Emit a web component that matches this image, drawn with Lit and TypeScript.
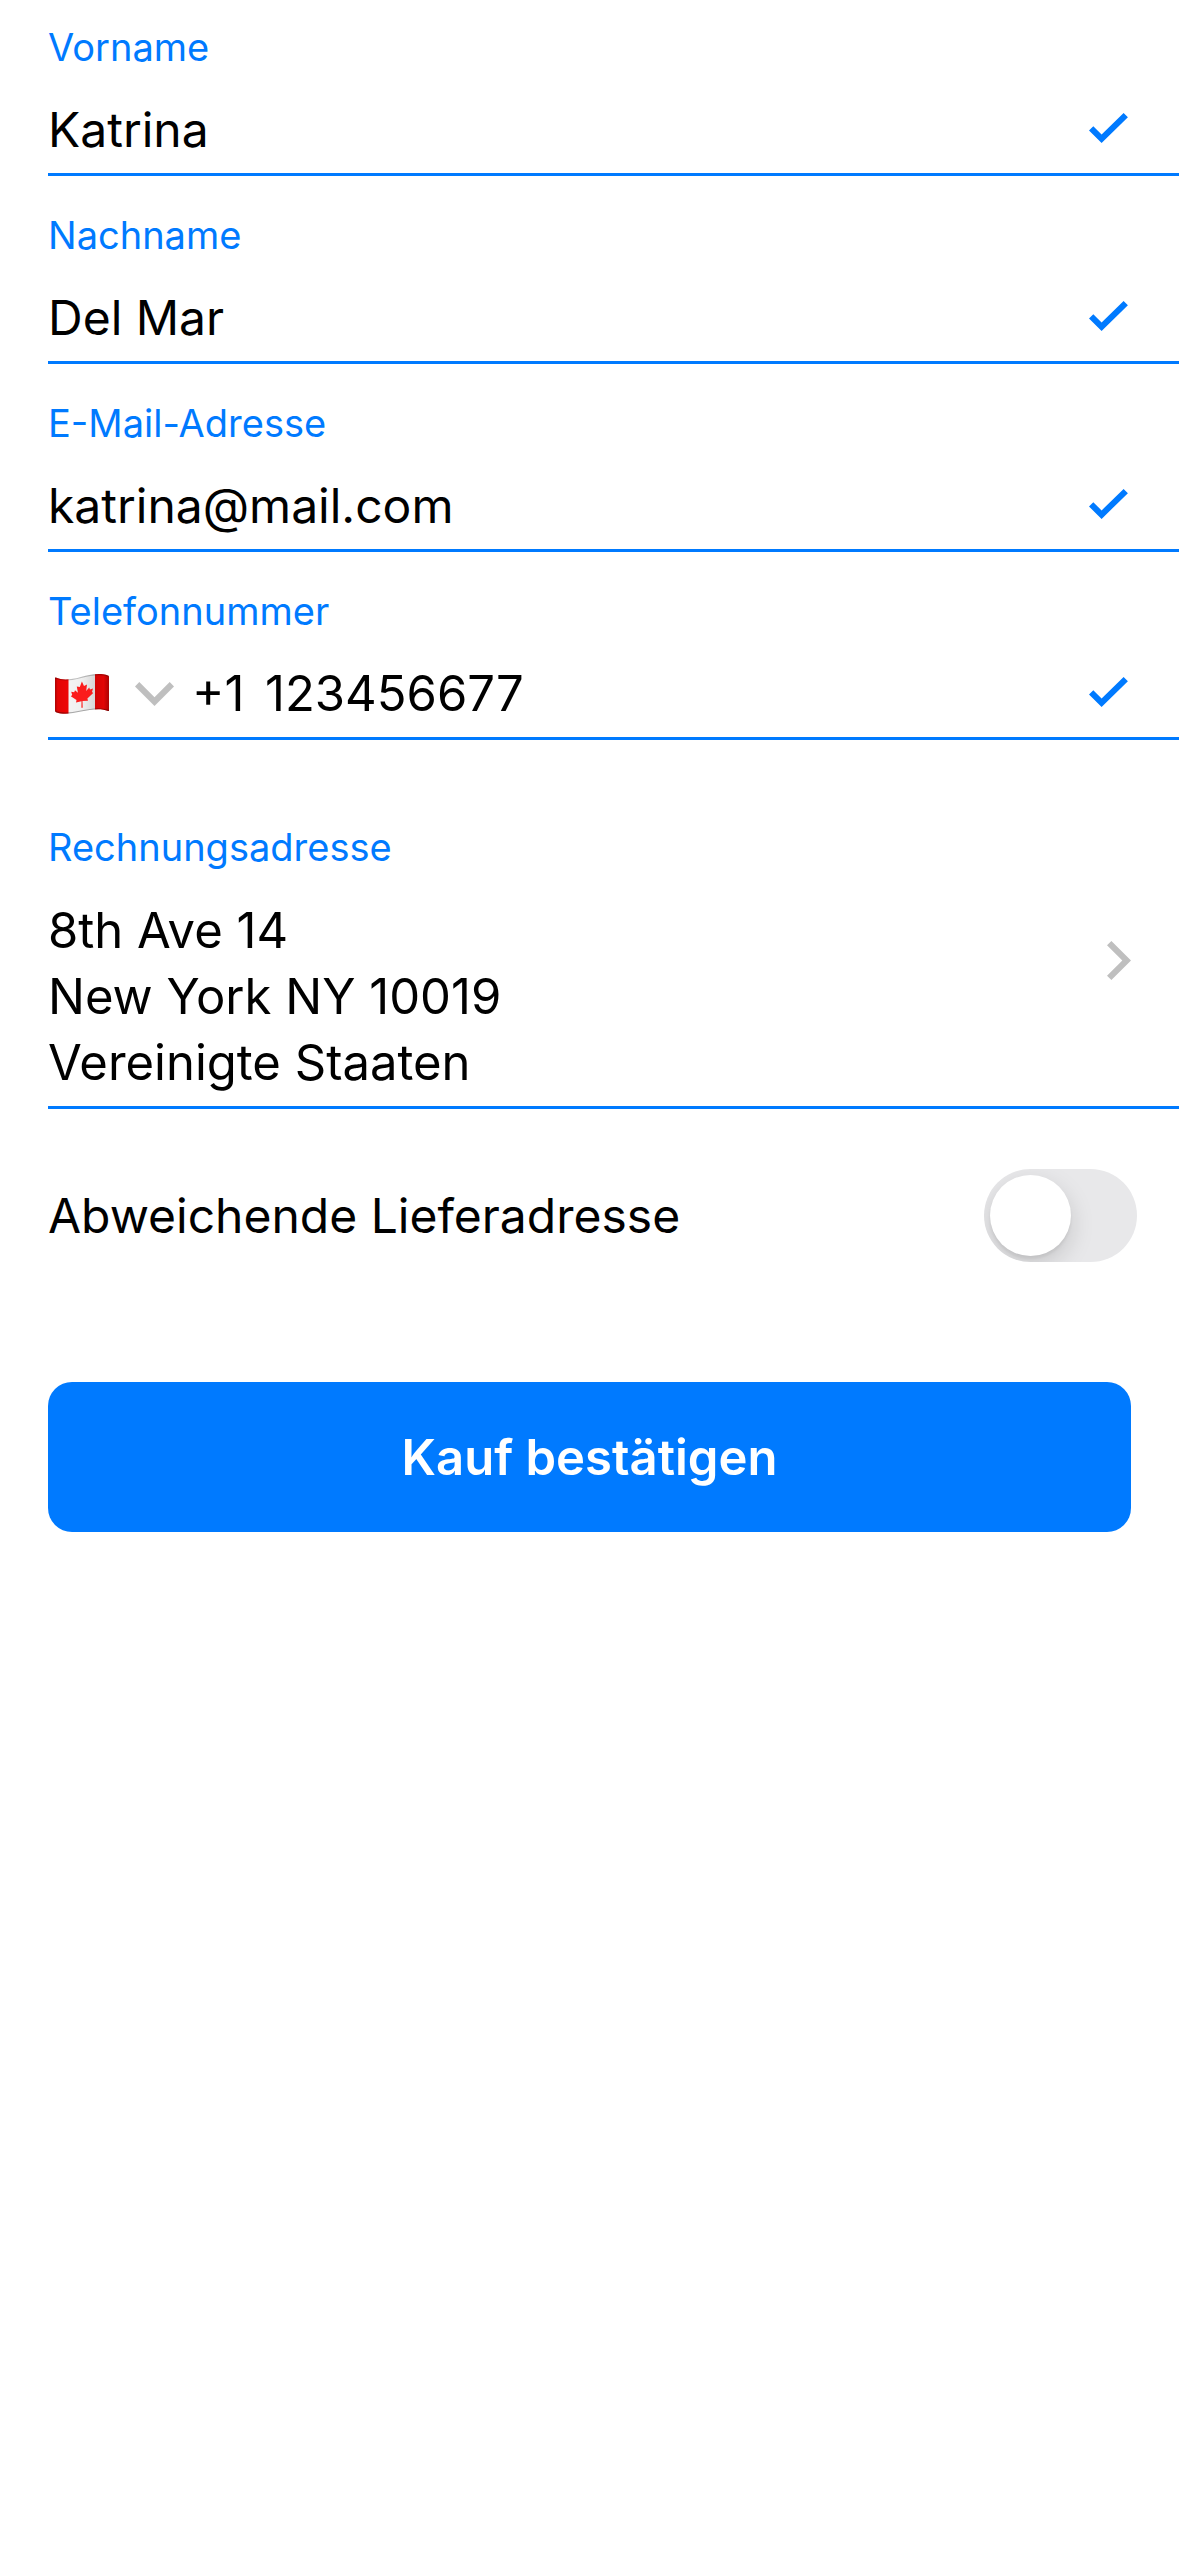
import { LitElement, html, css, svg } from "lit";
import { customElement, property, state } from "lit/decorators.js";

const checkIcon = html`<svg class="check" viewBox="0 0 39 33" aria-hidden="true">
  ${svg`<polygon points="0,17.5 4.3,13.3 12.6,21.4 34.6,0 38.9,4.2 12.6,29.9" fill="currentColor" />`}
</svg>`;

const chevronRight = html`<svg class="chevron-right" viewBox="0 0 24 39" aria-hidden="true">
  ${svg`<polygon points="4.4,0 24,19.5 4.4,39 0,34.7 15.3,19.5 0,4.3" fill="currentColor" />`}
</svg>`;

const chevronDown = html`<svg class="chevron-down" viewBox="0 0 39 24" aria-hidden="true">
  ${svg`<polygon points="0,4.4 4.3,0 19.5,15.2 34.7,0 39,4.4 19.5,24" fill="currentColor" />`}
</svg>`;

const canadaFlag = html`<svg class="flag" viewBox="0 0 54 40" aria-hidden="true">
  ${svg`
    <defs>
      <clipPath id="wave">
        <path d="M0.8 3.6 C8 6.8 17 5.4 25 3.2 C34 0.7 45 -1.6 53 1.6 Q54 2 54 3 V36.4 Q54 37.4 53 37 C45 33.8 35 35.8 26 37.6 C17 39.6 8 40.8 1 38.2 Q0 37.8 0 36.8 V4.2 Q0 3.3 0.8 3.6 Z" />
      </clipPath>
      <linearGradient id="fold" x1="0" x2="1" y1="0" y2="0">
        <stop offset="0" stop-color="#000" stop-opacity="0.28" />
        <stop offset="0.05" stop-color="#000" stop-opacity="0.04" />
        <stop offset="0.22" stop-color="#000" stop-opacity="0" />
        <stop offset="0.5" stop-color="#000" stop-opacity="0.02" />
        <stop offset="0.74" stop-color="#000" stop-opacity="0.12" />
        <stop offset="0.9" stop-color="#000" stop-opacity="0.04" />
        <stop offset="1" stop-color="#000" stop-opacity="0.28" />
      </linearGradient>
    </defs>
    <g clip-path="url(#wave)">
      <rect width="54" height="40" fill="#f4f4f4" />
      <rect width="13.5" height="40" fill="#ec0505" />
      <rect x="40" width="14" height="40" fill="#ec0505" />
      <rect width="54" height="40" fill="url(#fold)" />
      <path d="M0 3.6 C8 6.8 17 5.4 25 3.2 C34 0.7 45 -1.6 54 1.8" fill="none" stroke="#000" stroke-opacity="0.22" stroke-width="2" />
      <path d="M0 38 C8 40.8 17 39.6 26 37.6 C35 35.8 45 33.8 54 37" fill="none" stroke="#000" stroke-opacity="0.3" stroke-width="2" />
    </g>
    <path fill="#fb1d1d" d="M26.9 7.6 L29 12 L32 10.6 L31.2 17 L34.2 13.6 L35 15.6 L38 14.6 L37 18 L38.2 19 L32.4 24.6 L33 26.8 L27.5 27 L27.7 33.8 H26.4 L26.5 27.2 L21 28.4 L21.5 26 L15.8 22.2 L17.2 21 L16.2 17.8 L19.2 18.2 L20 16.2 L22.9 18.8 L21.8 12.4 L24.8 13 Z" />
  `}
</svg>`;

@customElement("text-field")
export class TextField extends LitElement {
  @property() label = "";
  @property() value = "";
  @property() type = "text";
  @property({ type: Boolean, reflect: true }) phone = false;

  static styles = css`
    :host {
      display: block;
      padding-top: 24px;
      border-bottom: 3px solid #007aff;
    }
    :host([phone]) {
      font-size: 49px;
    }
    .label {
      display: block;
      margin-bottom: 16px;
      font-size: 38px;
      line-height: 46px;
      color: #007aff;
    }
    .row {
      display: flex;
      align-items: center;
      padding-right: 51px;
    }
    input,
    select {
      box-sizing: border-box;
      height: 87px;
      margin: 0;
      border: 0;
      outline: 0;
      background: none;
      font: inherit;
      color: inherit;
      appearance: none;
    }
    input {
      flex: 1;
      min-width: 0;
      padding: 0;
    }
    .country {
      display: grid;
      align-items: center;
      padding-right: 20px;
    }
    .country > * {
      grid-area: 1 / 1;
    }
    .country select {
      padding: 0 0 0 144px;
    }
    .marks {
      display: flex;
      align-items: center;
      gap: 26px;
      padding-left: 7px;
      pointer-events: none;
    }
    .flag {
      width: 54px;
      height: 40px;
    }
    .chevron-down {
      width: 39px;
      height: 24px;
      color: #bfbfbf;
    }
    .check {
      width: 39px;
      height: 33px;
      color: #007aff;
    }
  `;

  render() {
    return html`
      <label class="label" for="value">${this.label}</label>
      <div class="row">
        ${this.phone
          ? html`<div class="country">
              <select aria-label="Landesvorwahl">
                <option>+1</option>
              </select>
              <span class="marks">${canadaFlag}${chevronDown}</span>
            </div>`
          : null}
        <input id="value" type=${this.type} .value=${this.value} />
        ${checkIcon}
      </div>
    `;
  }
}

@customElement("app-root")
export class AppRoot extends LitElement {
  @state() private separateDelivery = false;

  static styles = css`
    :host {
      display: block;
      min-height: 100vh;
      background: #fff;
      color: #000;
      font-family: Inter, "Liberation Sans", sans-serif;
      font-size: 48px;
    }
    form {
      padding-left: 48px;
    }
    .fields {
      display: grid;
      gap: 12px;
    }
    .address {
      display: grid;
      grid-template-columns: 1fr auto;
      align-items: center;
      width: 100%;
      margin: 60px 0 0;
      padding: 24px 48px 10px 0;
      border: 0;
      border-bottom: 3px solid #007aff;
      background: none;
      font: inherit;
      font-size: 49px;
      line-height: 66px;
      color: inherit;
      text-align: left;
    }
    .caption {
      display: block;
      margin-bottom: 28px;
      font-size: 38px;
      line-height: 46px;
      color: #007aff;
    }
    .line {
      display: block;
    }
    .chevron-right {
      width: 24px;
      height: 39px;
      color: #bfbfbf;
    }
    .delivery {
      display: flex;
      align-items: center;
      justify-content: space-between;
      margin-top: 60px;
      padding-right: 42px;
    }
    .switch {
      box-sizing: border-box;
      width: 153px;
      height: 93px;
      margin: 0;
      padding: 6px;
      border-radius: 47px;
      background: #e8e8ea;
      overflow: hidden;
      appearance: none;
    }
    .switch::before {
      content: "";
      display: block;
      width: 81px;
      height: 81px;
      border-radius: 50%;
      background: #fff;
      box-shadow: 0 9px 24px rgba(0, 0, 0, 0.15), 0 3px 3px rgba(0, 0, 0, 0.06);
    }
    .switch:checked {
      background: #34c759;
    }
    .switch:checked::before {
      margin-left: auto;
    }
    .submit {
      display: block;
      width: calc(100% - 48px);
      height: 150px;
      margin: 120px 0 0;
      padding: 0;
      border: 0;
      border-radius: 24px;
      background: #007aff;
      font: inherit;
      font-size: 49px;
      font-weight: 600;
      color: #fff;
    }
  `;

  render() {
    return html`
      <form @submit=${(e: Event) => e.preventDefault()}>
        <div class="fields">
          <text-field label="Vorname" value="Katrina"></text-field>
          <text-field label="Nachname" value="Del Mar"></text-field>
          <text-field label="E-Mail-Adresse" type="email" value="katrina@mail.com"></text-field>
          <text-field label="Telefonnummer" type="tel" phone value="123456677"></text-field>
        </div>
        <button class="address" type="button">
          <span>
            <span class="caption">Rechnungsadresse</span>
            <span class="line">8th Ave 14</span>
            <span class="line">New York NY 10019</span>
            <span class="line">Vereinigte Staaten</span>
          </span>
          ${chevronRight}
        </button>
        <div class="delivery">
          <label for="delivery">Abweichende Lieferadresse</label>
          <input
            id="delivery"
            class="switch"
            type="checkbox"
            role="switch"
            .checked=${this.separateDelivery}
            @change=${(e: Event) => (this.separateDelivery = (e.target as HTMLInputElement).checked)}
          />
        </div>
        <button class="submit" type="submit">Kauf bestätigen</button>
      </form>
    `;
  }
}
